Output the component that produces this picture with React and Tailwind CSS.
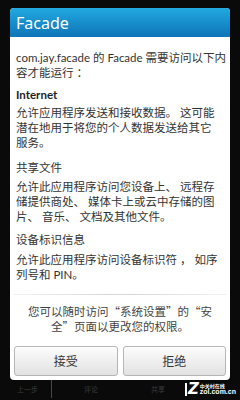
export default function App() {
  const font = { fontFamily: 'Lato, "Noto Sans CJK SC", sans-serif' };
  const cjk = { fontFamily: '"Noto Sans CJK SC", sans-serif' };
  return (
    <div className="w-[240px] h-[400px] bg-[#0a0a0a] flex flex-col overflow-hidden" style={font}>
      <div className="mt-[8px] mx-[10px] h-[372px] shrink-0 rounded-[4px] bg-white flex flex-col overflow-hidden">
        <div className="h-[29px] shrink-0 bg-gradient-to-b from-[#22a9e0] to-[#0f74b8] flex items-center px-[6px]">
          <span className="text-white text-[16px] leading-none" style={{ fontFamily: '"Noto Sans", sans-serif' }}>Facade</span>
        </div>
        <div className="flex-1 flex flex-col px-[6px] pt-[13px] text-[#333] text-[11.5px] leading-[15px] whitespace-nowrap">
          <p>
            com.jay.facade 的 Facade 需要访问以下内
            <br />
            容才能运行 ：
          </p>
          <p className="mt-[7px] font-bold text-[#1e1e1e]">Internet</p>
          <p className="mt-[3px]">
            允许应用程序发送和接收数据。 这可能
            <br />
            潜在地用于将您的个人数据发送给其它
            <br />
            服务。
          </p>
          <p className="mt-[10px]">共享文件</p>
          <p className="mt-[4px]">
            允许此应用程序访问您设备上、 远程存
            <br />
            储提供商处、 媒体卡上或云中存储的图
            <br />
            片、 音乐、 文档及其他文件。
          </p>
          <p className="mt-[8px]">设备标识信息</p>
          <p className="mt-[5px]">
            允许此应用程序访问设备标识符 ， 如序
            <br />
            列号和 PIN。
          </p>
          <div className="mt-[12px] h-px -mx-[2px] bg-gradient-to-r from-[#f2f2f2] via-[#d4d4d4] to-[#f2f2f2]" />
          <p className="mt-[9px] text-center text-[#444]" style={cjk}>
            您可以随时访问“系统设置”的“安
            <br />
            全”页面以更改您的权限。
          </p>
          <div className="mt-auto mb-[4px] -mx-[2px] grid grid-cols-2 gap-[5px]">
            <button className="h-[30px] rounded-[3px] border border-[#b5b5b5] bg-gradient-to-b from-[#fcfcfc] to-[#e2e2e2] text-[12px] text-[#333] shadow-[inset_0_1px_0_#fff]">
              接受
            </button>
            <button className="h-[30px] rounded-[3px] border border-[#b5b5b5] bg-gradient-to-b from-[#fcfcfc] to-[#e2e2e2] text-[12px] text-[#333] shadow-[inset_0_1px_0_#fff]">
              拒绝
            </button>
          </div>
        </div>
      </div>
      <div className="flex-1 flex items-center pb-[2px] text-[7px] text-[#3c3c3c]" style={cjk}>
        <span className="ml-[17px]">上一步</span>
        <span className="ml-[13px] w-px self-stretch bg-[#1d4f8e]" />
        <span className="ml-[32px]">评论</span>
        <span className="ml-[53px]">共享</span>
        <div className="ml-auto mr-[4px] flex items-center">
          <span className="w-[2px] h-[13px] bg-white mr-[1px]" />
          <span className="text-white font-black text-[15px] leading-none italic" style={{ fontFamily: '"DejaVu Sans", sans-serif' }}>Z</span>
          <div className="ml-[1px] flex flex-col leading-none">
            <span className="text-white text-[5px] font-bold">中关村在线</span>
            <span className="text-white text-[7px] font-bold" style={{ fontFamily: '"Liberation Sans", sans-serif' }}>zol.com.cn</span>
          </div>
        </div>
      </div>
    </div>
  );
}
